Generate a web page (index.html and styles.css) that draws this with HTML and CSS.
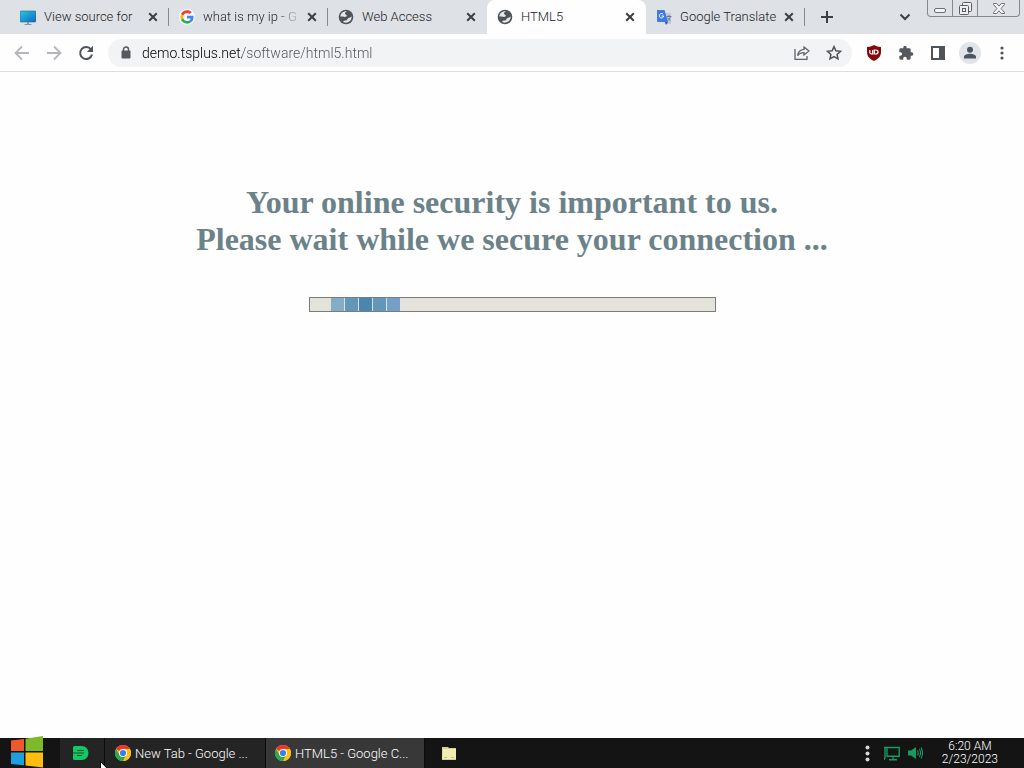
FILE: index.html
```html
<!DOCTYPE html>
<html lang="en">
<head>
  <meta charset="UTF-8">
  <meta name="viewport" content="width=device-width, initial-scale=1.0">
  <title>HTML5</title>
  <link rel="stylesheet" href="styles.css">
</head>
<body>
  <!-- shared icons -->
  <svg class="defs" width="0" height="0" aria-hidden="true">
    <symbol id="close" viewBox="0 0 10 10">
      <path d="M1.2 1.2l7.6 7.6M8.8 1.2L1.2 8.8" stroke="#3c4043" stroke-width="2" fill="none"/>
    </symbol>
    <symbol id="globe" viewBox="0 0 16 16">
      <circle cx="8" cy="8" r="7.300" fill="#505357"/>
      <path d="M9 2.300C7.800 3 7 3.600 7 4.600c0 1.200 1.600 1 1.800 2 .2 1-.9 1.300-2 1.300-1.400 0-2.400-.5-4.400-.3C2.300 4.600 5 2 9 2.300z" fill="#e4e6ea"/>
      <path d="M13.600 7.300c.4 3.400-2.300 6.300-5.600 6.400-1 0-2-.3-2.800-.8.300-1.200 1.500-1.100 2.800-1.300 1.400-.3 1.100-1.500 2-2.200.9-.8 2.600-.5 3.600-2.100z" fill="#e4e6ea"/>
    </symbol>
    <symbol id="chrome" viewBox="0 0 16 16">
      <circle cx="8" cy="8" r="8" fill="#fbc116"/>
      <path d="M8 8L1.070 4A8 8 0 0 1 14.930 4H8z" fill="#e33b2e"/>
      <path d="M8 8L4.540 10 1.070 4A8 8 0 0 0 8 16l3.460-6z" fill="#2da94f"/>
      <path d="M8 4h6.930A8 8 0 0 1 8 16l3.460-6z" fill="#fbc116"/>
      <circle cx="8" cy="8" r="4" fill="#fff"/>
      <circle cx="8" cy="8" r="3.100" fill="#3f7de8"/>
    </symbol>
  </svg>

  <header class="browser">
    <div class="tab-strip">
      <div class="tab">
        <svg class="favicon" viewBox="0 0 16 16">
          <defs>
            <linearGradient id="screen" x1="0" y1="0" x2="1" y2="1">
              <stop offset="0" stop-color="#2fc3e0"/>
              <stop offset="1" stop-color="#0b6cc0"/>
            </linearGradient>
          </defs>
          <rect x="0" y="2" width="16" height="11" rx="1" fill="url(#screen)" stroke="#27698c" stroke-width=".6"/>
          <path d="M7 13h2v2h2.500v1h-7v-1H7z" fill="#7d97a8"/>
        </svg>
        <a class="tab-title" href="#">View source for</a>
        <button class="tab-close" aria-label="Close tab"><svg><use href="#close"/></svg></button>
      </div>
      <div class="tab">
        <svg class="favicon round" viewBox="0 0 48 48">
          <circle cx="24" cy="24" r="24" fill="#f8f9fb"/>
          <path d="M24 12c3.200 0 6 1.100 8.200 3.200l6-6C34.500 5.800 29.700 4 24 4 16 4 9.200 8.600 6 15.200l6.900 5.300C14.600 15.600 18.900 12 24 12z" fill="#ea4335"/>
          <path d="M43.500 24.500c0-1.400-.1-2.800-.4-4.100H24v7.900h11c-.5 2.500-1.900 4.600-4 6l6.500 5c4-3.600 6-8.800 6-14.800z" fill="#4285f4"/>
          <path d="M12.900 28A12 12 0 0 1 12.900 20.500L6 15.200a20 20 0 0 0 0 18z" fill="#fbbc05"/>
          <path d="M24 44c5.400 0 10-1.800 13.500-4.800l-6.500-5c-1.900 1.200-4.200 1.900-7 1.900-5.200 0-9.500-3.300-11.100-8.100L6 33.200C9.200 39.600 16 44 24 44z" fill="#34a853"/>
        </svg>
        <a class="tab-title fade" href="#">what is my ip - G</a>
        <button class="tab-close" aria-label="Close tab"><svg><use href="#close"/></svg></button>
      </div>
      <div class="tab plain">
        <svg class="favicon"><use href="#globe"/></svg>
        <a class="tab-title" href="#">Web Access</a>
        <button class="tab-close" aria-label="Close tab"><svg><use href="#close"/></svg></button>
      </div>
      <div class="tab active">
        <svg class="favicon"><use href="#globe"/></svg>
        <a class="tab-title" href="#">HTML5</a>
        <button class="tab-close" aria-label="Close tab"><svg><use href="#close"/></svg></button>
      </div>
      <div class="tab">
        <svg class="favicon" viewBox="0 0 16 16">
          <path d="M7 4h8v11H9z" fill="#c3cbd6"/>
          <path d="M1 1h7.500l3.500 12H2a1 1 0 0 1-1-1z" fill="#4179dc"/>
          <path d="M9 13h3l-2 3z" fill="#2c56b5"/>
          <path d="M7.200 5.300A2.200 2.200 0 1 0 7.700 7H5.600" fill="none" stroke="#fff" stroke-width="1"/>
          <path d="M10.500 7.500h5M13 6v1.500M14.500 7.500c-.5 2-1.500 3.300-3 4.300M11.500 8.500c.8 1.500 1.800 2.500 3 3.300" fill="none" stroke="#667a9c" stroke-width="1"/>
        </svg>
        <a class="tab-title" href="#">Google Translate</a>
        <button class="tab-close" aria-label="Close tab"><svg><use href="#close"/></svg></button>
      </div>
      <button class="new-tab" aria-label="New tab">
        <svg width="12" height="12" viewBox="0 0 12 12"><path d="M6 0v12M0 6h12" stroke="#3c4043" stroke-width="2"/></svg>
      </button>
      <button class="tab-search" aria-label="Search tabs">
        <svg width="12" height="8" viewBox="0 0 12 8"><path d="M1.500 1.500L6 6l4.500-4.500" fill="none" stroke="#3c4043" stroke-width="2"/></svg>
      </button>
      <div class="window-buttons">
        <button aria-label="Minimize">
          <svg width="12" height="5" viewBox="0 0 12 5"><rect x=".5" y=".5" width="11" height="4" rx="1.500" fill="#f4f5f7" stroke="#6d7075"/></svg>
        </button>
        <button aria-label="Restore">
          <svg width="13" height="13" viewBox="0 0 13 13" fill="#eceef1" stroke="#595c60"><rect x="3.500" y=".5" width="9" height="9" rx="1"/><rect x=".5" y="3.500" width="9" height="9" rx="1"/><rect x="3.500" y="6.500" width="3" height="3"/></svg>
        </button>
        <button class="wide" aria-label="Close">
          <svg width="12" height="11" viewBox="0 0 12 11"><path d="M.5.500h3.200L6 3.200 8.300.5h3.200v1L8 5.500l3.500 4v1H8.300L6 7.800l-2.300 2.700H.5v-1l3.500-4-3.500-4z" fill="#f4f5f7" stroke="#6d7075"/></svg>
        </button>
      </div>
    </div>

    <div class="toolbar">
      <button class="tool" aria-label="Back">
        <svg width="16" height="16" viewBox="0 0 16 16"><path d="M15 8H2M8 1.500L1.500 8 8 14.500" fill="none" stroke="#b4b6b9" stroke-width="1.800"/></svg>
      </button>
      <button class="tool" aria-label="Forward">
        <svg width="16" height="16" viewBox="0 0 16 16"><path d="M1 8h13M8 1.500L14.500 8 8 14.500" fill="none" stroke="#b4b6b9" stroke-width="1.800"/></svg>
      </button>
      <button class="tool" aria-label="Reload">
        <svg width="16" height="16" viewBox="0 0 16 16"><path d="M13 4.500A6 6 0 1 0 14 9.500" fill="none" stroke="#505357" stroke-width="2"/><path d="M15 .8V7H8.800z" fill="#505357"/></svg>
      </button>
      <div class="address">
        <svg width="10" height="13" viewBox="0 0 10 13"><path d="M2.500 6V3.500a2.500 2.500 0 0 1 5 0V6" fill="none" stroke="#55585c" stroke-width="1.500"/><rect x=".5" y="4.500" width="9" height="8" rx="1" fill="#55585c"/></svg>
        <input class="url" type="text" aria-label="Address" value="demo.tsplus.net/software/html5.html">
        <button class="tool" aria-label="Share">
          <svg width="16" height="14" viewBox="0 0 16 14" fill="none" stroke="#5f6368" stroke-width="1.300"><path d="M1 3v10.300h12V10"/><path d="M10 1l5 4-5 4V6.600C7 6.600 5 7.500 3.700 9.800 4 6.300 6.500 3.700 10 3.400z"/></svg>
        </button>
        <button class="tool" aria-label="Bookmark">
          <svg width="16" height="16" viewBox="0 0 16 16"><path d="M8 1.600l1.900 4.200 4.600.5-3.400 3.100.9 4.500L8 11.600l-4 2.300.9-4.500L1.500 6.300l4.600-.5z" fill="none" stroke="#505357" stroke-width="1.500"/></svg>
        </button>
      </div>
      <button class="tool" aria-label="uBlock Origin">
        <svg width="16" height="16" viewBox="0 0 16 16"><path d="M8 0c2 1.300 4.300 2 7 2v5c0 4.500-3 7.300-7 9-4-1.700-7-4.500-7-9V2c2.700 0 5-.7 7-2z" fill="#800a10"/><path d="M3.800 5v2.600q0 1.400 1.900 1.400h1V5M8.300 5v4h1.400q2.300 0 2.300-2t-2.300-2z" fill="none" stroke="#fff" stroke-width="1.200"/></svg>
      </button>
      <button class="tool" aria-label="Extensions">
        <svg width="16" height="16" viewBox="0 0 24 24"><path d="M20.500 11H19V7a2 2 0 0 0-2-2h-4V3.500a2.500 2.500 0 0 0-5 0V5H4a2 2 0 0 0-2 2v3.800h1.500a2.700 2.700 0 0 1 0 5.400H2V20a2 2 0 0 0 2 2h3.800v-1.500a2.700 2.700 0 0 1 5.400 0V22H17a2 2 0 0 0 2-2v-4h1.500a2.500 2.500 0 0 0 0-5z" fill="#55585c"/></svg>
      </button>
      <button class="tool" aria-label="Side panel">
        <svg width="14" height="14" viewBox="0 0 14 14"><rect x="1" y="1" width="12" height="12" fill="#fff" stroke="#505357" stroke-width="2"/><path d="M8 1h5v12H8z" fill="#505357"/></svg>
      </button>
      <button class="tool" aria-label="Profile">
        <svg width="22" height="22" viewBox="0 0 22 22"><circle cx="11" cy="11" r="11" fill="#e1e5ea"/><circle cx="11" cy="7.800" r="3" fill="#4b5563"/><path d="M5 16.500v-1.800c0-2 3.500-3 6-3s6 1 6 3v1.800z" fill="#4b5563"/></svg>
      </button>
      <button class="tool" aria-label="Menu">
        <svg width="4" height="14" viewBox="0 0 4 14" fill="#505357"><circle cx="2" cy="2" r="1.600"/><circle cx="2" cy="7" r="1.600"/><circle cx="2" cy="12" r="1.600"/></svg>
      </button>
    </div>
  </header>

  <main class="page">
    <h1>Your online security is important to us.<br>Please wait while we secure your connection ...</h1>
    <div class="progress" role="progressbar" aria-label="Securing connection">
      <span class="block light"></span>
      <span class="block"></span>
      <span class="block dark"></span>
      <span class="block"></span>
      <span class="block end"></span>
    </div>
  </main>

  <footer class="taskbar">
    <button class="start" aria-label="Start">
      <svg width="34" height="32" viewBox="0 0 34 32"><path d="M1 4.500L14 3v12H1z" fill="#f0592b"/><path d="M15.500 2.800L33 0v15H15.500z" fill="#7db928"/><path d="M1 16.500h13v12.800L1 28z" fill="#1ba1e2"/><path d="M15.500 16.500H33V31.500l-17.500-2z" fill="#fdbd10"/></svg>
    </button>
    <button class="task pinned" aria-label="Notes">
      <svg width="16" height="14" viewBox="0 0 16 14"><path d="M1.500 0H9a6.500 7 0 0 1 0 14H1.500A1.500 1.500 0 0 1 0 12.500v-11A1.500 1.500 0 0 1 1.500 0z" fill="#12c765"/><path d="M4 4.500h7M0 7h11M4 9.500h5" stroke="#14502f" stroke-width="1.200"/></svg>
    </button>
    <button class="task">
      <svg width="16" height="16"><use href="#chrome"/></svg>
      <span>New Tab - Google ...</span>
    </button>
    <button class="task current">
      <svg width="16" height="16"><use href="#chrome"/></svg>
      <span>HTML5 - Google C...</span>
    </button>
    <button class="task folder" aria-label="File Explorer">
      <svg width="14" height="14" viewBox="0 0 14 14"><path d="M0 1h6l1 1h7v12H0z" fill="#d9d08c"/><path d="M1 3h13v10H0z" fill="#f0eeb0"/><path d="M2 11h3v1H2zM9 11h3v1H9z" fill="#a9c7b2"/></svg>
    </button>
    <div class="tray">
      <button aria-label="Hidden icons">
        <svg width="5" height="17" viewBox="0 0 5 17" fill="#d8d8d8"><circle cx="2.500" cy="2.500" r="2"/><circle cx="2.500" cy="8.500" r="2"/><circle cx="2.500" cy="14.500" r="2"/></svg>
      </button>
      <button aria-label="Network">
        <svg width="16" height="15" viewBox="0 0 16 15" fill="none" stroke="#159a62" stroke-width="1.400"><path d="M3 1.500h12.200v8.700H3z"/><path d="M9 10v3.500M5 13.700h8M0 1.500h3M1 1.500v10l-1 2.500"/></svg>
      </button>
      <button aria-label="Volume">
        <svg width="15" height="14" viewBox="0 0 15 14"><path d="M0 4.500h3L8 1v12L3 9.500H0z" fill="#159a62"/><path d="M9.500 4.500q1.500 2.500 0 5M11.300 3q2.500 4 0 8M13 1.500q3 5.500 0 11" fill="none" stroke="#159a62" stroke-width="1.100"/></svg>
      </button>
      <time class="clock">6:20 AM<br>2/23/2023</time>
    </div>
    <svg class="cursor" width="12" height="18" viewBox="0 0 12 18"><path d="M.5.500v15l3.500-3.500 2.500 5 2-1-2.300-4.500h5z" fill="#fff" stroke="#000"/></svg>
  </footer>
</body>
</html>
```
FILE: styles.css
```css
* {
  box-sizing: border-box;
}
body {
  margin: 0;
  min-height: 100vh;
  display: flex;
  flex-direction: column;
  overflow: hidden;
  background-color: #fefefe;
  font-family: Roboto, sans-serif;
  font-size: 13px;
  font-weight: 300;
  color: #202124;
}
button {
  display: flex;
  align-items: center;
  justify-content: center;
  padding: 0;
  border: none;
  background: none;
  font: inherit;
  color: inherit;
}
svg {
  flex-shrink: 0;
}
.defs {
  position: absolute;
}

/* tabs */
.tab-strip {
  display: flex;
  height: 34px;
  padding-left: 10px;
  background-color: #dee1e6;
}
.tab {
  flex: 0 1 159px;
  display: flex;
  align-items: center;
  min-width: 0;
  padding: 0 10px;
  position: relative;
}
.tab::after {
  content: "";
  position: absolute;
  right: 0;
  top: 8px;
  width: 1px;
  height: 18px;
  background-color: #85888d;
}
.tab.active {
  background-color: #fefefe;
  border-radius: 8px 8px 0 0;
}
.tab.plain::after,
.tab.active::after {
  display: none;
}
.favicon {
  width: 16px;
  height: 16px;
  margin-right: 8px;
}
.tab-title {
  flex: 1;
  overflow: hidden;
  white-space: nowrap;
  line-height: 20px;
  color: #202124;
  text-decoration: none;
}
.fade {
  color: transparent;
  background: linear-gradient(90deg, #202124 76px, #a4a9b2 90px);
  -webkit-background-clip: text;
  background-clip: text;
}
.tab-close {
  width: 12px;
  height: 16px;
  margin-left: 4px;
}
.tab-close svg {
  width: 10px;
  height: 10px;
}
.new-tab {
  width: 44px;
}
.tab-search {
  width: 24px;
  margin-left: auto;
}
.window-buttons {
  display: flex;
  height: 17px;
  margin: 0 4px 0 10px;
  border: 1px solid #85888d;
  border-top: none;
  border-radius: 0 0 4px 4px;
}
.window-buttons button {
  width: 25px;
  border-right: 1px solid #85888d;
}
.window-buttons .wide {
  width: 41px;
  border-right: none;
}
.window-buttons button:first-child {
  padding-top: 4px;
}

/* toolbar */
.toolbar {
  display: flex;
  align-items: center;
  height: 38px;
  padding: 0 6px;
  border-bottom: 1px solid #dcdddf;
  background-color: #fefefe;
}
.tool {
  width: 32px;
  height: 28px;
}
.address {
  flex: 1;
  display: flex;
  align-items: center;
  height: 28px;
  margin: 0 6px;
  padding: 0 2px 0 13px;
  border-radius: 14px;
  background-color: #f1f3f4;
}
.url {
  flex: 1;
  min-width: 0;
  margin-left: 11px;
  padding: 0;
  border: none;
  outline: none;
  font-family: inherit;
  font-size: 14px;
  font-weight: inherit;
  color: transparent;
  background: linear-gradient(90deg, #000 100px, #505357 100px);
  -webkit-background-clip: text;
  background-clip: text;
}

/* page */
.page {
  flex: 1;
  padding: 112px 20px 20px;
  text-align: center;
}
h1 {
  margin: 0 0 39px;
  font-family: "Liberation Serif", serif;
  font-size: 32px;
  line-height: 37px;
  color: #6b8289;
}
.progress {
  display: flex;
  gap: 1px;
  width: 407px;
  max-width: 100%;
  height: 15px;
  margin: 0 auto;
  padding-left: 21px;
  border: 1px solid #7b7b78;
  background-color: #e3e3dc;
}
.block {
  width: 13px;
  background-color: #6397ba;
  box-shadow: 1px 0 #d3e2eb;
}
.block.light {
  background-color: #85aec6;
}
.block.dark {
  background-color: #4a86ae;
}
.block.end {
  background-color: #759fc6;
  box-shadow: none;
}

/* taskbar */
.taskbar {
  position: relative;
  display: flex;
  height: 30px;
  background-color: #141414;
  color: #fff;
}
.start {
  width: 60px;
  height: 30px;
  align-items: flex-end;
  padding-right: 7px;
}
.task {
  justify-content: flex-start;
  gap: 4px;
  width: 161px;
  padding-left: 10px;
  border-right: 1px solid #0c0c0c;
  background-color: #242424;
  white-space: nowrap;
}
.task.pinned {
  width: 45px;
  padding-left: 13px;
}
.task.current {
  width: 159px;
  padding-left: 9px;
  background-color: #383838;
}
.task.folder {
  width: 48px;
  justify-content: center;
  padding-left: 0;
  border: none;
  background: none;
}
.tray {
  display: flex;
  align-items: center;
  gap: 8px;
  margin-left: auto;
  padding-right: 26px;
}
.tray button:first-child {
  margin-right: 6px;
}
.clock {
  margin-left: 11px;
  font-size: 12px;
  line-height: 13px;
  text-align: center;
}
.cursor {
  position: absolute;
  left: 100px;
  top: 23px;
}
```
